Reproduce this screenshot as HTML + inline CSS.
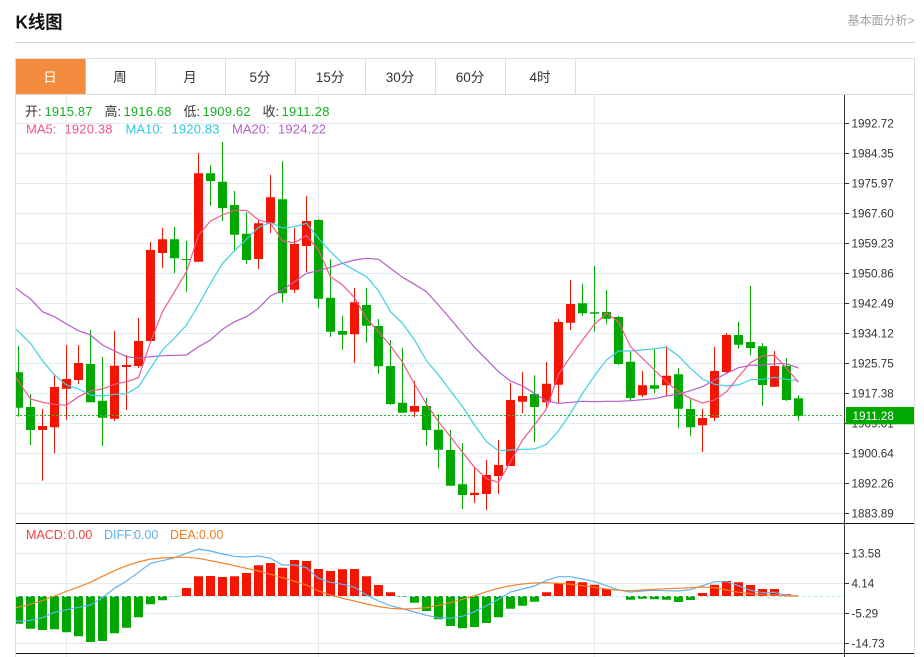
<!DOCTYPE html>
<html lang="zh">
<head>
<meta charset="utf-8">
<title>K线图</title>
<style>
html,body{margin:0;padding:0;background:#fff;width:924px;height:657px;overflow:hidden}
svg{display:block}
text{font-family:"Liberation Sans","Noto Sans CJK SC",sans-serif}
.t{font-size:13.5px;fill:#333;text-anchor:middle}
.a{font-size:11.7px;fill:#333}
.l{font-size:13px}
.g{fill:#14b01f}
.k{fill:#333}
</style>
</head>
<body>
<svg width="924" height="657" viewBox="0 0 924 657" xmlns="http://www.w3.org/2000/svg">
<defs><clipPath id="c"><rect x="16" y="95" width="828" height="562"/></clipPath></defs>

<text x="15.5" y="28.5" font-size="18" font-weight="700" fill="#111" textLength="47" lengthAdjust="spacingAndGlyphs">K线图</text>
<text x="847.5" y="24.5" font-size="12" fill="#a0a0a0">基本面分析&gt;</text>
<path d="M15 42.5H915" stroke="#d0d0d0" fill="none"/>

<!-- frame and tabs -->
<path d="M15.5 657V58.5H914.5V657M15.5 94.5H914.5M85.5 59V94M155.5 59V94M225.5 59V94M295.5 59V94M365.5 59V94M435.5 59V94M505.5 59V94M575.5 59V94" stroke="#dcdcdc" fill="none"/>
<rect x="16" y="59" width="69.5" height="35" fill="#f48c40"/>
<text class="t" x="50" y="82" style="fill:#fff">日</text>
<text class="t" x="120" y="82">周</text>
<text class="t" x="190" y="82">月</text>
<text class="t" x="260" y="82">5分</text>
<text class="t" x="330" y="82">15分</text>
<text class="t" x="400" y="82">30分</text>
<text class="t" x="470" y="82">60分</text>
<text class="t" x="540" y="82">4时</text>

<!-- grid -->
<path d="M16 123.5H844M16 153.5H844M16 183.5H844M16 213.5H844M16 243.5H844M16 273.5H844M16 303.5H844M16 333.5H844M16 363.5H844M16 393.5H844M16 423.5H844M16 453.5H844M16 483.5H844M16 513.5H844M16 553.5H844M16 583.5H844M16 613.5H844M16 643.5H844M66.5 95V657M318.5 95V657M594.5 95V657" stroke="#e3ebf2" fill="none"/>

<g clip-path="url(#c)">
<!-- candles red -->
<path fill="none" stroke="#f41500" d="M42.5 409V480.7M54.5 375V453.3M66.5 345V420M78.5 345V384M114.5 331V421M126.5 355V410M138.5 318V368M150.5 242V341M162.5 228V268M198.5 153V262M258.5 220V269M270.5 175V233M294.5 228V293M306.5 196V272M354.5 288V363M414.5 381V417M474.5 467V503M486.5 460V510M498.5 440V494M510.5 383V466M522.5 372V413M546.5 362V409M558.5 319V403M570.5 280V330M642.5 371V397M666.5 346V396M702.5 409V452M714.5 347V421M726.5 333V374M774.5 351V387"/>
<path fill="#f41500" d="M38 426h9V430h-9zM50 387h9V427.3h-9zM62 379h9V388.7h-9zM74 363h9V380h-9zM110 365.7h9V418.7h-9zM122 365h9V367h-9zM134 341h9V366h-9zM146 250h9V341h-9zM158 239.3h9V253h-9zM194 173.3h9V261.7h-9zM254 223.3h9V259h-9zM266 197.3h9V223.3h-9zM290 244h9V289.7h-9zM302 221h9V246h-9zM350 302.3h9V334.3h-9zM410 406h9V411.7h-9zM470 492.7h9V495h-9zM482 475h9V494h-9zM494 465h9V476h-9zM506 400h9V466h-9zM518 396h9V401.7h-9zM542 383.7h9V402.3h-9zM554 322h9V384.7h-9zM566 304h9V322.7h-9zM638 385.3h9V395.3h-9zM662 375.7h9V385.3h-9zM698 418h9V425.3h-9zM710 371h9V417.7h-9zM722 335h9V372h-9zM770 366h9V386.7h-9z"/>
<!-- candles green -->
<path fill="none" stroke="#00a800" d="M18.5 346V416.7M30.5 394.3V445M90.5 330V402M102.5 357V446M174.5 227V273M186.5 241V291.7M210.5 165.3V205.7M222.5 142V221M234.5 191V251.7M246.5 212.3V264M282.5 161.3V302.7M318.5 219V307.7M330.5 259.3V336.7M342.5 316V349.7M366.5 288V342.7M378.5 319V373.7M390.5 340V405M402.5 347.7V412.7M426.5 397.7V445.7M438.5 414.3V468.3M450.5 430V485.7M462.5 443.3V509M534.5 375.3V442M582.5 284V315.7M594.5 266V331.7M606.5 290V323.7M618.5 316V365M630.5 351.7V401M654.5 349.3V393.3M678.5 368V428.3M690.5 399.3V435.7M738.5 321.7V348.7M750.5 285.7V355.3M762.5 343V405.7M786.5 358.3V401M798.5 395.3V420.7"/>
<path fill="#00a800" d="M16 372.3h7V407.7h-7zM26 407h9V430h-9zM86 364h9V402.3h-9zM98 400.7h9V417.7h-9zM170 239.3h9V258.3h-9zM182 259h9V260h-9zM206 173.3h9V181h-9zM218 181.7h9V208h-9zM230 205h9V234.7h-9zM242 233.7h9V260h-9zM278 199.3h9V293.3h-9zM314 220h9V298.7h-9zM326 297.7h9V331.7h-9zM338 331h9V334.7h-9zM362 305h9V325.7h-9zM374 326h9V366.3h-9zM386 366h9V404h-9zM398 402.7h9V412.7h-9zM422 406h9V430h-9zM434 429.7h9V449.7h-9zM446 450h9V485.7h-9zM458 484.3h9V495h-9zM530 394h9V407h-9zM578 303.3h9V313.3h-9zM590 312.3h9V313.7h-9zM602 312h9V318.7h-9zM614 317h9V364h-9zM626 361.7h9V398h-9zM650 385.3h9V388.7h-9zM674 374.3h9V408.7h-9zM686 409h9V427.3h-9zM734 335h9V344.7h-9zM746 342h9V348h-9zM758 346.3h9V385h-9zM782 365.7h9V400h-9zM794 398.3h9V416h-9z"/>

<!-- MA lines -->
<polyline fill="none" stroke="#b55cc9" stroke-width="1.2" points="16,288.3 30.5,299 42.5,311.7 54.5,316.7 66.5,324 78.5,330.7 90.5,335 102.5,345 114.5,351 126.5,356.7 138.5,358.3 150.5,356.7 162.5,355.7 174.5,355.3 186.5,355 198.5,346.7 210.5,340 222.5,329.3 234.5,321.7 246.5,316.7 258.5,308.3 270.5,296 282.5,290 294.5,281.7 306.5,273.3 318.5,270.7 330.5,267.3 342.5,263.3 354.5,260 366.5,258.3 378.5,259.3 390.5,268.3 402.5,277.3 414.5,284.3 426.5,291.7 438.5,305 450.5,319 462.5,333.3 474.5,347.3 486.5,359.3 498.5,371.7 510.5,381 522.5,386 534.5,393.3 546.5,401 558.5,403.3 570.5,402.3 582.5,401.3 594.5,401.7 606.5,401.3 618.5,401.3 630.5,400.7 642.5,399.7 654.5,398.7 666.5,396 678.5,394 690.5,390.7 702.5,386.7 714.5,380 726.5,373.3 738.5,367.7 750.5,365.3 762.5,365 774.5,363.7 786.5,363.7 798.5,368"/>
<polyline fill="none" stroke="#3fcfe4" stroke-width="1.2" points="16,329 30.5,343.3 42.5,360.7 54.5,375 66.5,385 78.5,389 90.5,395 102.5,396 114.5,394.3 126.5,393.7 138.5,386.7 150.5,368.3 162.5,350 174.5,338 186.5,325 198.5,305 210.5,283.3 222.5,263.3 234.5,250.7 246.5,239.3 258.5,227.3 270.5,222.7 282.5,228 294.5,226.7 306.5,223.3 318.5,238.3 330.5,251.7 342.5,263.3 354.5,270 366.5,276.7 378.5,290.7 390.5,311.7 402.5,323.3 414.5,340 426.5,360.7 438.5,375 450.5,390.7 462.5,406.7 474.5,425 486.5,441.7 498.5,450.7 510.5,450 522.5,449.3 534.5,449 546.5,444.3 558.5,431 570.5,413.3 582.5,393.3 594.5,375.7 606.5,360 618.5,351 630.5,351 642.5,350 654.5,348.7 666.5,347.3 678.5,356 690.5,368.3 702.5,379 714.5,384.3 726.5,386 738.5,385 750.5,379.7 762.5,379.3 774.5,377.3 786.5,379.3 798.5,380.7"/>
<polyline fill="none" stroke="#f0588e" stroke-width="1.2" points="16,377.7 30.5,399 42.5,402.3 54.5,404.3 66.5,405.3 78.5,396.7 90.5,391 102.5,389 114.5,384.3 126.5,381.7 138.5,377.7 150.5,342 162.5,311.7 174.5,291.7 186.5,271.7 198.5,235 210.5,221 222.5,215 234.5,210.3 246.5,210.3 258.5,220 270.5,223.3 282.5,241 294.5,242.7 306.5,235.7 318.5,250 330.5,276.7 342.5,285 354.5,297.7 366.5,318.3 378.5,331.7 390.5,345.7 402.5,362.3 414.5,384 426.5,404 438.5,421.7 450.5,436.7 462.5,452.3 474.5,467.3 486.5,478.7 498.5,482.3 510.5,461.7 522.5,440 534.5,425 546.5,409 558.5,374.3 570.5,356.7 582.5,340 594.5,324.3 606.5,313.3 618.5,321.7 630.5,346.7 642.5,358.3 654.5,370 666.5,381.7 678.5,391.7 690.5,398.3 702.5,403 714.5,400 726.5,391.7 738.5,376.7 750.5,362.7 762.5,356 774.5,355.3 786.5,368.3 798.5,382.3"/>

<!-- last price line -->
<path d="M16 415.5H844" stroke="#28b838" stroke-dasharray="2 2" fill="none" shape-rendering="crispEdges"/>

<!-- MACD histogram -->
<path fill="#f41500" d="M182 588h9V596h-9zM194 576.3h9V596h-9zM206 576h9V596h-9zM218 577h9V596h-9zM230 576.3h9V596h-9zM242 573h9V596h-9zM254 565.3h9V596h-9zM266 563h9V596h-9zM278 567.7h9V596h-9zM290 560h9V596h-9zM302 561h9V596h-9zM314 569h9V596h-9zM326 571h9V596h-9zM338 569.3h9V596h-9zM350 569h9V596h-9zM362 576.3h9V596h-9zM374 585h9V596h-9zM386 592.3h9V596h-9zM542 592.3h9V596h-9zM554 583.3h9V596h-9zM566 581h9V596h-9zM578 582.3h9V596h-9zM590 584.7h9V596h-9zM602 589h9V596h-9zM698 593h9V596h-9zM710 584.7h9V596h-9zM722 581h9V596h-9zM734 582.3h9V596h-9zM746 585h9V596h-9zM758 589h9V596h-9zM770 589h9V596h-9zM782 594.3h9V596h-9z"/>
<path fill="#00a800" d="M16 596h7V623.7h-7zM26 596h9V628.7h-9zM38 596h9V630h-9zM50 596h9V629.3h-9zM62 596h9V632.3h-9zM74 596h9V636.3h-9zM86 596h9V642h-9zM98 596h9V641h-9zM110 596h9V633.3h-9zM122 596h9V627.7h-9zM134 596h9V617.3h-9zM146 596h9V604.3h-9zM158 596h9V600.3h-9zM170 596h9V596.5h-9zM398 596h9V596.7h-9zM410 596h9V602.7h-9zM422 596h9V611h-9zM434 596h9V619.3h-9zM446 596h9V626h-9zM458 596h9V628.3h-9zM470 596h9V627h-9zM482 596h9V623h-9zM494 596h9V617.3h-9zM506 596h9V608.7h-9zM518 596h9V605.7h-9zM530 596h9V601.7h-9zM626 596h9V599.7h-9zM638 596h9V598.7h-9zM650 596h9V599.3h-9zM662 596h9V599.7h-9zM674 596h9V602h-9zM686 596h9V600h-9z"/>
<path d="M16 596.5H844" stroke="#b4e2ee" stroke-dasharray="3 3" fill="none"/>

<!-- DIFF / DEA -->
<polyline fill="none" stroke="#62b2f2" stroke-width="1.2" points="16,621.3 30.5,620.3 42.5,617.7 54.5,612.3 66.5,609.7 78.5,607.3 90.5,605 102.5,597.7 114.5,588.3 126.5,581 138.5,572.3 150.5,563.3 162.5,560.7 174.5,557.7 186.5,553.3 198.5,549 210.5,551 222.5,554 234.5,556.3 246.5,557 258.5,556 270.5,558.3 282.5,565 294.5,565 306.5,567.7 318.5,578.3 330.5,582.3 342.5,584.3 354.5,587.3 366.5,595 378.5,601 390.5,605.7 402.5,608.7 414.5,612 426.5,615.3 438.5,617.7 450.5,618.3 462.5,616.3 474.5,611.7 486.5,605.7 498.5,599.3 510.5,592 522.5,589 534.5,586 546.5,580.3 558.5,576.7 570.5,576.7 582.5,579 594.5,581.7 606.5,585.7 618.5,590 630.5,592 642.5,591 654.5,590.3 666.5,590.7 678.5,591 690.5,589.7 702.5,585.7 714.5,581.7 726.5,581.7 738.5,585.7 750.5,590.3 762.5,592.7 774.5,592.3 786.5,595.3 798.5,596"/>
<polyline fill="none" stroke="#f5822a" stroke-width="1.2" points="16,607.7 30.5,604.3 42.5,600.7 54.5,596 66.5,591.3 78.5,587 90.5,582.3 102.5,576.3 114.5,570.7 126.5,565.7 138.5,562 150.5,559 162.5,558 174.5,557.3 186.5,557.3 198.5,558.3 210.5,560.7 222.5,563 234.5,565.7 246.5,568.3 258.5,571 270.5,574.3 282.5,577.7 294.5,581.3 306.5,585 318.5,591 330.5,595 342.5,598.3 354.5,601 366.5,604 378.5,606.7 390.5,608.3 402.5,609 414.5,608.7 426.5,607.7 438.5,605.3 450.5,602.7 462.5,599.3 474.5,595.7 486.5,591.7 498.5,588.3 510.5,585.7 522.5,584 534.5,583 546.5,582.7 558.5,583.3 570.5,584.3 582.5,585.7 594.5,587.3 606.5,589 618.5,590.3 630.5,590.7 642.5,590 654.5,589.3 666.5,588.7 678.5,588.3 690.5,587.7 702.5,587 714.5,587.7 726.5,590 738.5,592.3 750.5,593.7 762.5,594.7 774.5,595 786.5,596 798.5,596"/>
</g>

<!-- panel separators, axis -->
<path d="M16 523.5H914M16 653.5H914" stroke="#111" fill="none"/>
<path d="M844.5 95V657" stroke="#333" fill="none"/>
<path d="M844 123.5h5M844 153.5h5M844 183.5h5M844 213.5h5M844 243.5h5M844 273.5h5M844 303.5h5M844 333.5h5M844 363.5h5M844 393.5h5M844 423.5h5M844 453.5h5M844 483.5h5M844 513.5h5M844 553.5h5M844 583.5h5M844 613.5h5M844 643.5h5" stroke="#333" fill="none"/>

<!-- axis labels -->
<text class="a" x="851.5" y="127.5">1992.72</text>
<text class="a" x="851.5" y="157.5">1984.35</text>
<text class="a" x="851.5" y="187.5">1975.97</text>
<text class="a" x="851.5" y="217.5">1967.60</text>
<text class="a" x="851.5" y="247.5">1959.23</text>
<text class="a" x="851.5" y="277.5">1950.86</text>
<text class="a" x="851.5" y="307.5">1942.49</text>
<text class="a" x="851.5" y="337.5">1934.12</text>
<text class="a" x="851.5" y="367.5">1925.75</text>
<text class="a" x="851.5" y="397.5">1917.38</text>
<text class="a" x="851.5" y="427.5">1909.01</text>
<text class="a" x="851.5" y="457.5">1900.64</text>
<text class="a" x="851.5" y="487.5">1892.26</text>
<text class="a" x="851.5" y="517.5">1883.89</text>
<text class="a" x="851.5" y="557.5">13.58</text>
<text class="a" x="851.5" y="587.5">4.14</text>
<text class="a" x="851.5" y="617.5">-5.29</text>
<text class="a" x="851.5" y="647.5">-14.73</text>
<rect x="846" y="407" width="68" height="17.3" fill="#00a800"/>
<text class="a" x="852.5" y="420" style="fill:#fff">1911.28</text>

<!-- legend -->
<text class="l k" x="25" y="116">开:</text><text class="l g" x="44.5" y="116" textLength="48">1915.87</text>
<text class="l k" x="104.5" y="116">高:</text><text class="l g" x="123.5" y="116" textLength="48">1916.68</text>
<text class="l k" x="183.5" y="116">低:</text><text class="l g" x="202.5" y="116" textLength="48">1909.62</text>
<text class="l k" x="262.5" y="116">收:</text><text class="l g" x="281.5" y="116" textLength="48">1911.28</text>
<g class="l">
<text x="26" y="133.5" font-size="13" fill="#f0548c">MA5:</text><text x="64.5" y="133.5" font-size="13" fill="#f0548c" textLength="48">1920.38</text>
<text x="125.5" y="133.5" font-size="13" fill="#2ec7e0">MA10:</text><text x="171.5" y="133.5" font-size="13" fill="#2ec7e0" textLength="48">1920.83</text>
<text x="232" y="133.5" font-size="13" fill="#b55cc9">MA20:</text><text x="278" y="133.5" font-size="13" fill="#b55cc9" textLength="48">1924.22</text>
</g>
<text x="26" y="539" font-size="12.5" fill="#f0453f">MACD:</text><text x="68" y="539" font-size="12.5" fill="#f0453f">0.00</text>
<text x="104" y="539" font-size="12.5" fill="#5ab0f0">DIFF:</text><text x="134" y="539" font-size="12.5" fill="#5ab0f0">0.00</text>
<text x="170" y="539" font-size="12.5" fill="#f57c20">DEA:</text><text x="199" y="539" font-size="12.5" fill="#f57c20">0.00</text>
</svg>
</body>
</html>
